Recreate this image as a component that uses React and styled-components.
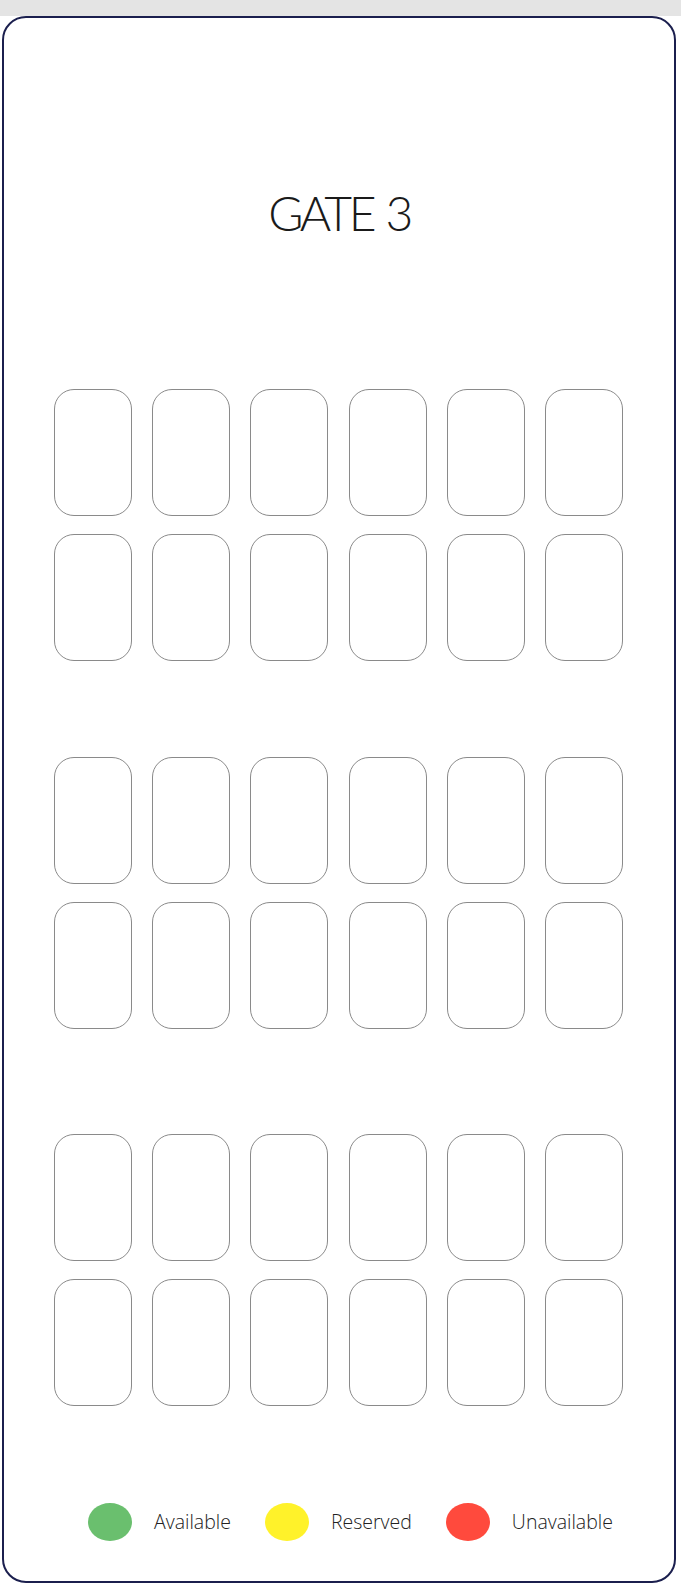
import React from "react";
import styled, { createGlobalStyle } from "styled-components";

const GlobalStyle = createGlobalStyle`
  * { box-sizing: border-box; }
  body {
    margin: 0;
    background: #ffffff;
    font-family: "Lato", "Open Sans", sans-serif;
  }
`;

const sections = [
  { top: 152, rows: 2 },
  { top: 96, rows: 2 },
  { top: 105, rows: 2 },
];

const legend = [
  { label: "Available", color: "#6abf6e" },
  { label: "Reserved", color: "#fff22a" },
  { label: "Unavailable", color: "#ff4a3d" },
];

const App = () => {
  return (
    <Page>
      <GlobalStyle />
      <TopBar />
      <Card>
        <Title>GATE 3</Title>
        {sections.map((section, i) => (
          <SeatGrid key={i} $top={section.top}>
            {Array.from({ length: section.rows * 6 }).map((_, j) => (
              <Seat key={j} />
            ))}
          </SeatGrid>
        ))}
        <Legend>
          {legend.map((item) => (
            <LegendItem key={item.label}>
              <Dot $color={item.color} />
              <LegendLabel>{item.label}</LegendLabel>
            </LegendItem>
          ))}
        </Legend>
      </Card>
    </Page>
  );
};

export default App;

const Page = styled.div`
  width: 681px;
  display: flex;
  flex-direction: column;
`;

const TopBar = styled.div`
  height: 16px;
  background: #e4e4e4;
`;

const Card = styled.section`
  width: 674px;
  height: 1567px;
  margin-left: 2px;
  border: 2px solid #1b1f4e;
  border-radius: 24px;
  display: flex;
  flex-direction: column;
  align-items: center;
  padding-top: 170px;
`;

const Title = styled.h1`
  margin: 0;
  font-family: "Lato", sans-serif;
  font-weight: 300;
  font-size: 48px;
  line-height: 49px;
  letter-spacing: -3.5px;
  word-spacing: 3px;
  color: #1a1a1a;
`;

const SeatGrid = styled.div`
  margin-top: ${(p) => p.$top}px;
  margin-left: -1px;
  display: grid;
  grid-template-columns: repeat(6, 78px);
  column-gap: 20.2px;
  row-gap: 18px;
`;

const Seat = styled.div`
  width: 78px;
  height: 127px;
  border: 1px solid #8a8a8a;
  border-radius: 20px;
`;

const Legend = styled.div`
  align-self: flex-start;
  margin-top: 97px;
  margin-left: 84px;
  display: flex;
  align-items: center;
  gap: 34px;
`;

const LegendItem = styled.div`
  display: flex;
  align-items: center;
  gap: 22px;
`;

const Dot = styled.span`
  width: 44px;
  height: 38px;
  border-radius: 50%;
  background: ${(p) => p.$color};
`;

const LegendLabel = styled.span`
  font-family: "Open Sans", sans-serif;
  font-weight: 300;
  font-size: 19.5px;
  line-height: 1;
  padding-bottom: 1px;
  color: #222222;
`;
